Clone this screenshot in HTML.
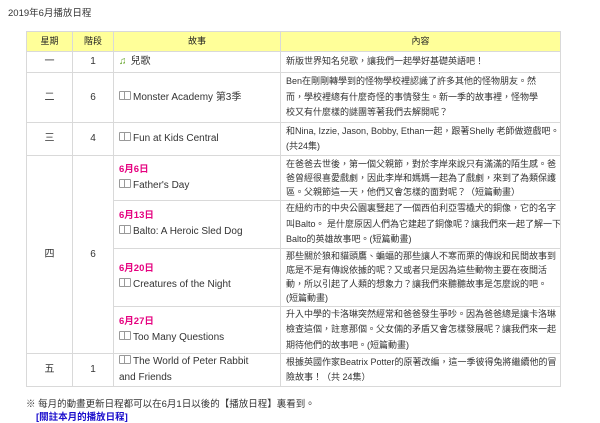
<!DOCTYPE html>
<html><head><meta charset="utf-8"><style>
body{margin:0;background:#fff;font-family:"Liberation Sans","Noto Sans CJK TC",sans-serif;font-size:9px;color:#333;}
.t{position:absolute;left:8px;top:5px;font-size:9.5px;}
table{position:absolute;left:26px;top:31px;border-collapse:collapse;width:535px;table-layout:fixed;}
td,th{border:1px solid #d9d9d9;padding:0 5px;font-size:9px;line-height:15.5px;vertical-align:middle;white-space:nowrap;overflow:hidden;}
td.s{font-size:10px;line-height:16px;}
td.q{line-height:14px;}
th{background:#ffff99;height:19px;font-weight:normal;color:#222;}
.c{text-align:center;font-size:10px;}
.d{color:#e5007f;font-weight:bold;font-size:9.5px;}
.bk{display:inline-block;width:10px;height:7px;border:1px solid #999;border-radius:1px;margin-right:2px;position:relative;vertical-align:0;}
.bk:after{content:"";position:absolute;left:4px;top:0;width:1px;height:7px;background:#999;}
.n{color:#5a9e1a;font-weight:bold;margin-right:4px;}
.f{position:absolute;left:26px;top:396px;font-size:9.5px;}
.l{position:absolute;left:36px;top:409px;font-size:9.5px;color:#1a0dcc;font-weight:bold;}
</style></head><body>
<div class="t">2019年6月播放日程</div>
<table>
<colgroup><col style="width:46px"><col style="width:41px"><col style="width:167px"><col></colgroup>
<tr><th>星期</th><th>階段</th><th>故事</th><th>內容</th></tr>
<tr style="height:21px"><td class="c">一</td><td class="c">1</td><td class="s"><span class="n">♫</span>兒歌</td><td>新版世界知名兒歌，讓我們一起學好基礎英語吧！</td></tr>
<tr style="height:50px"><td class="c">二</td><td class="c">6</td><td class="s"><span class="bk"></span>Monster Academy 第3季</td><td>Ben在剛剛轉學到的怪物學校裡認識了許多其他的怪物朋友。然<br>而，學校裡總有什麼奇怪的事情發生。新一季的故事裡，怪物學<br>校又有什麼樣的謎團等著我們去解開呢？</td></tr>
<tr style="height:33px"><td class="c">三</td><td class="c">4</td><td class="s"><span class="bk"></span>Fun at Kids Central</td><td>和Nina, Izzie, Jason, Bobby, Ethan一起，跟著Shelly 老師做遊戲吧。<br>(共24集)</td></tr>
<tr style="height:45px"><td class="c" rowspan="4">四</td><td class="c" rowspan="4">6</td><td class="s"><span class="d">6月6日</span><br><span class="bk"></span>Father's Day</td><td class="q">在爸爸去世後，第一個父親節，對於李岸來說只有滿滿的陌生感。爸<br>爸曾經很喜愛戲劇，因此李岸和媽媽一起為了戲劇，來到了為類保護<br>區。父親節這一天，他們又會怎樣的面對呢？（短篇動畫）</td></tr>
<tr style="height:46px"><td class="s"><span class="d">6月13日</span><br><span class="bk"></span>Balto: A Heroic Sled Dog</td><td>在紐約市的中央公園裏豎起了一個西伯利亞雪橇犬的銅像，它的名字<br>叫Balto。 是什麼原因人們為它建起了銅像呢？讓我們來一起了解一下<br>Balto的英雄故事吧。(短篇動畫)</td></tr>
<tr style="height:58px"><td class="s"><span class="d">6月20日</span><br><span class="bk"></span>Creatures of the Night</td><td class="q">那些關於狼和貓頭鷹、蝙蝠的那些讓人不寒而栗的傳說和民間故事到<br>底是不是有傳說依據的呢？又或者只是因為這些動物主要在夜間活<br>動，所以引起了人類的想象力？讓我們來聽聽故事是怎麼說的吧。<br>(短篇動畫)</td></tr>
<tr style="height:46px"><td class="s"><span class="d">6月27日</span><br><span class="bk"></span>Too Many Questions</td><td>升入中學的卡洛琳突然經常和爸爸發生爭吵。因為爸爸總是讓卡洛琳<br>檢查這個，註意那個。父女倆的矛盾又會怎樣發展呢？讓我們來一起<br>期待他們的故事吧。(短篇動畫)</td></tr>
<tr style="height:33px"><td class="c">五</td><td class="c">1</td><td class="s"><span class="bk"></span>The World of Peter Rabbit<br>and Friends</td><td>根據英國作家Beatrix Potter的原著改編，這一季彼得兔將繼續他的冒<br>險故事！（共 24集）</td></tr>
</table>
<div class="f">※ 每月的動畫更新日程都可以在6月1日以後的【播放日程】裏看到。</div>
<div class="l">[關註本月的播放日程]</div>
</body></html>
